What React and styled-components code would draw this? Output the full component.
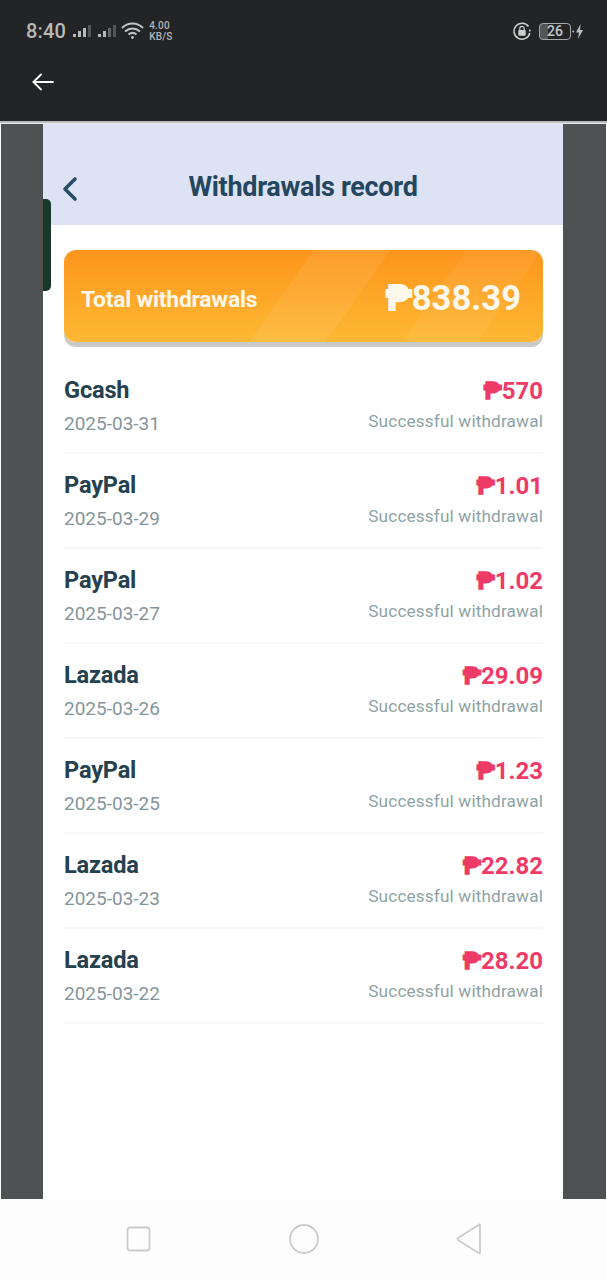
import React from "react";
import styled, { createGlobalStyle } from "styled-components";

const Global = createGlobalStyle`
  html, body { margin: 0; padding: 0; background: #fdfdfd; }
  * { box-sizing: border-box; }
`;

const Page = styled.div`
  width: 607px; height: 1280px; display: flex; flex-direction: column;
  font-family: Roboto, "Liberation Sans", sans-serif; overflow: hidden; background: #fdfdfd;
`;
const TopArea = styled.div`
  height: 121px; background: #232426; padding: 18px 23px 0 26px; display: flex; flex-direction: column; flex: none;
`;
const StatusBar = styled.div`
  height: 26px; display: flex; align-items: center; justify-content: space-between; color: #bdbdbd;
`;
const StatusGroup = styled.div`
  display: flex; align-items: center;
`;
const Clock = styled.span`
  font-size: 20px; font-weight: 500; letter-spacing: 0.2px; margin-right: 7px; color: #b9b9b9;
`;
const Speed = styled.span`
  display: flex; flex-direction: column; font-size: 10px; line-height: 11px; font-weight: 500; margin-left: 5px; color: #b5b5b5; letter-spacing: 0.2px;
`;
const Battery = styled.div`
  width: 32px; height: 17px; border: 1px solid #a8a8a8; border-radius: 4px; margin-left: 8px; font-size: 14px; font-weight: 500;
  display: flex; align-items: center; justify-content: center; color: #c8c8c8;
  background: linear-gradient(90deg, #555 0 26%, transparent 26%);
`;
const BackRow = styled.div`
  margin-top: 25px; height: 26px; display: flex; align-items: center; padding-left: 6px;
`;
const Divider = styled.div`
  height: 3px; flex: none; background: linear-gradient(#b9baba 0 2px, #eceef0 2px);
`;
const Frame = styled.div`
  height: 1075px; flex: none; display: flex; padding: 0 1px; background: #fff;
`;
const SideBar = styled.div`
  width: ${p => p.$w}px; flex: none; background: #505153;
`;
const Screen = styled.div`
  flex: 1; position: relative; background: #fff; display: flex; flex-direction: column;
`;
const GreenTab = styled.div`
  position: absolute; left: 0; top: 75px; width: 8px; height: 92px; background: #17382a; border-radius: 0 5px 5px 0; z-index: 2;
`;
const Header = styled.div`
  height: 101px; flex: none; background: #dde3f4; position: relative; display: flex; align-items: center; justify-content: center; padding-top: 24px;
`;
const Title = styled.h1`
  margin: 0; font-size: 27px; font-weight: 700; color: #24465f; letter-spacing: -0.3px;
`;
const BackChevron = styled.svg`
  position: absolute; left: 19px; top: 52px;
`;
const Content = styled.div`
  padding: 25px 20px 0 21px; display: flex; flex-direction: column;
`;
const TotalCard = styled.div`
  height: 92px; border-radius: 12px; padding: 0 22px 0 17px; display: flex; align-items: center; justify-content: space-between;
  color: #fdf8ec; box-shadow: 0 5px 0 #c9cac8;
  background:
    linear-gradient(125deg, transparent 0 46%, rgba(255,255,255,0.07) 46% 60%, transparent 60% 74%, rgba(255,255,255,0.05) 74% 88%, transparent 88%),
    linear-gradient(180deg, #fd951c 0%, #fdb934 100%);
`;
const TotalLabel = styled.span`
  font-size: 22.8px; font-weight: 700; letter-spacing: -0.2px; margin-top: 6px;
`;
const TotalValue = styled.span`
  font-size: 34.6px; font-weight: 700; letter-spacing: 0; margin-top: 4px;
`;
const Peso = styled.span`
  -webkit-text-stroke: ${p => p.$stroke}px currentColor;
`;
const List = styled.div`
  margin-top: 17px; display: flex; flex-direction: column;
`;
const Row = styled.div`
  height: 95px; padding-top: 18px; display: flex; justify-content: space-between; border-bottom: 2px solid #f6f7f8;
`;
const Column = styled.div`
  display: flex; flex-direction: column; align-items: ${p => (p.$end ? "flex-end" : "flex-start")};
`;
const Name = styled.span`
  font-size: 23.6px; line-height: 27px; font-weight: 700; color: #25414f; letter-spacing: -0.2px;
`;
const DateText = styled.span`
  font-size: 19px; line-height: 22px; margin-top: 9px; color: #84959a;
`;
const Amount = styled.span`
  font-size: 24px; line-height: 28px; font-weight: 700; color: #ee3a67;
`;
const Status = styled.span`
  font-size: 17.2px; line-height: 22px; margin-top: 5px; color: #8ea3a5; letter-spacing: 0.15px;
`;
const NavBar = styled.div`
  flex: 1; background: #fdfdfd; display: flex; justify-content: space-between; align-items: center; padding: 0 125px 2px 126px;
`;

const rows = [
  ["Gcash", "2025-03-31", "570"],
  ["PayPal", "2025-03-29", "1.01"],
  ["PayPal", "2025-03-27", "1.02"],
  ["Lazada", "2025-03-26", "29.09"],
  ["PayPal", "2025-03-25", "1.23"],
  ["Lazada", "2025-03-23", "22.82"],
  ["Lazada", "2025-03-22", "28.20"],
];

export default function App() {
  return (
    <Page>
      <Global />
      <TopArea>
        <StatusBar>
          <StatusGroup>
            <Clock>8:40</Clock>
            <svg width="20" height="16" viewBox="0 0 20 16" fill="#b9b9b9">
              <rect x="0" y="11" width="3" height="3" /><rect x="5" y="8" width="3" height="6" /><rect x="10" y="5" width="3" height="9" /><rect x="15" y="2" width="3" height="12" fill="#555" />
            </svg>
            <svg width="20" height="16" viewBox="0 0 20 16" fill="#b9b9b9" style={{ marginLeft: 5 }}>
              <rect x="0" y="11" width="3" height="3" /><rect x="5" y="8" width="3" height="6" /><rect x="10" y="5" width="3" height="9" fill="#666" /><rect x="15" y="2" width="3" height="12" fill="#555" />
            </svg>
            <svg width="23" height="18" viewBox="0 0 23 18" fill="none" stroke="#c4c4c4" strokeWidth="2" style={{ marginLeft: 3 }}>
              <path d="M1 6 C7 0 16 0 22 6" /><path d="M4 9.5 C8.500 5.500 14.500 5.500 19 9.500" /><path d="M7.500 12.500 C10 10.500 13 10.500 15.500 12.500" />
              <circle cx="11.500" cy="15.500" r="1.400" fill="#c4c4c4" stroke="none" />
            </svg>
            <Speed><span>4.00</span><span>KB/S</span></Speed>
          </StatusGroup>
          <StatusGroup>
            <svg width="18" height="18" viewBox="0 0 18 18" fill="none" stroke="#cfcfcf" strokeWidth="1.500">
              <path d="M16.800 11 A8 8 0 1 1 15.500 4.500" /><path d="M16.500 7.500 A8 8 0 0 1 16.900 9.500" />
              <rect x="5.300" y="8" width="7.400" height="5.800" rx="1" fill="#cfcfcf" stroke="none" />
              <path d="M6.800 8 V6.500 a2.200 2.200 0 0 1 4.400 0 V8" strokeWidth="1.200" />
            </svg>
            <Battery>26</Battery>
            <svg width="12" height="17" viewBox="0 0 12 17" fill="#bdbdbd" style={{ marginLeft: 1 }}>
              <circle cx="1.200" cy="8.500" r="1" />
              <path d="M8.500 1 L4 9.500 H7 L6 16 L11 7 H8 Z" />
            </svg>
          </StatusGroup>
        </StatusBar>
        <BackRow>
          <svg width="22" height="18" viewBox="0 0 22 18" fill="none" stroke="#fff" strokeWidth="1.800" strokeLinecap="round" strokeLinejoin="round">
            <path d="M21 9 H1.500" /><path d="M9 1.500 L1.500 9 L9 16.500" />
          </svg>
        </BackRow>
      </TopArea>
      <Divider />
      <Frame>
        <SideBar $w={42} />
        <Screen>
          <GreenTab />
          <Header>
            <BackChevron width="16" height="26" viewBox="0 0 16 26" fill="none" stroke="#2b4d66" strokeWidth="3.600" strokeLinecap="round" strokeLinejoin="round">
              <path d="M13 3 L3 13 L13 23" />
            </BackChevron>
            <Title>Withdrawals record</Title>
          </Header>
          <Content>
            <TotalCard>
              <TotalLabel>Total withdrawals</TotalLabel>
              <TotalValue><Peso $stroke={2.2}>₱</Peso>838.39</TotalValue>
            </TotalCard>
            <List>
              {rows.map(([name, date, amount]) => (
                <Row key={date}>
                  <Column>
                    <Name>{name}</Name>
                    <DateText>{date}</DateText>
                  </Column>
                  <Column $end>
                    <Amount><Peso $stroke={1.5}>₱</Peso>{amount}</Amount>
                    <Status>Successful withdrawal</Status>
                  </Column>
                </Row>
              ))}
            </List>
          </Content>
        </Screen>
        <SideBar $w={43} />
      </Frame>
      <NavBar>
        <svg width="26" height="26" viewBox="0 0 26 26" fill="none" stroke="#cbcbcb" strokeWidth="1.800"><rect x="1.500" y="1.500" width="22" height="23" rx="2.500" /></svg>
        <svg width="32" height="32" viewBox="0 0 32 32" fill="none" stroke="#cbcbcb" strokeWidth="1.800"><circle cx="16" cy="16" r="14" /></svg>
        <svg width="26" height="32" viewBox="0 0 26 32" fill="none" stroke="#cbcbcb" strokeWidth="1.800" strokeLinejoin="round"><path d="M24 2 V29.500 Q24 30.500 22.500 30 L2 17 Q1 16 2 15 L22.500 2 Q24 1 24 2 Z" /></svg>
      </NavBar>
    </Page>
  );
}
